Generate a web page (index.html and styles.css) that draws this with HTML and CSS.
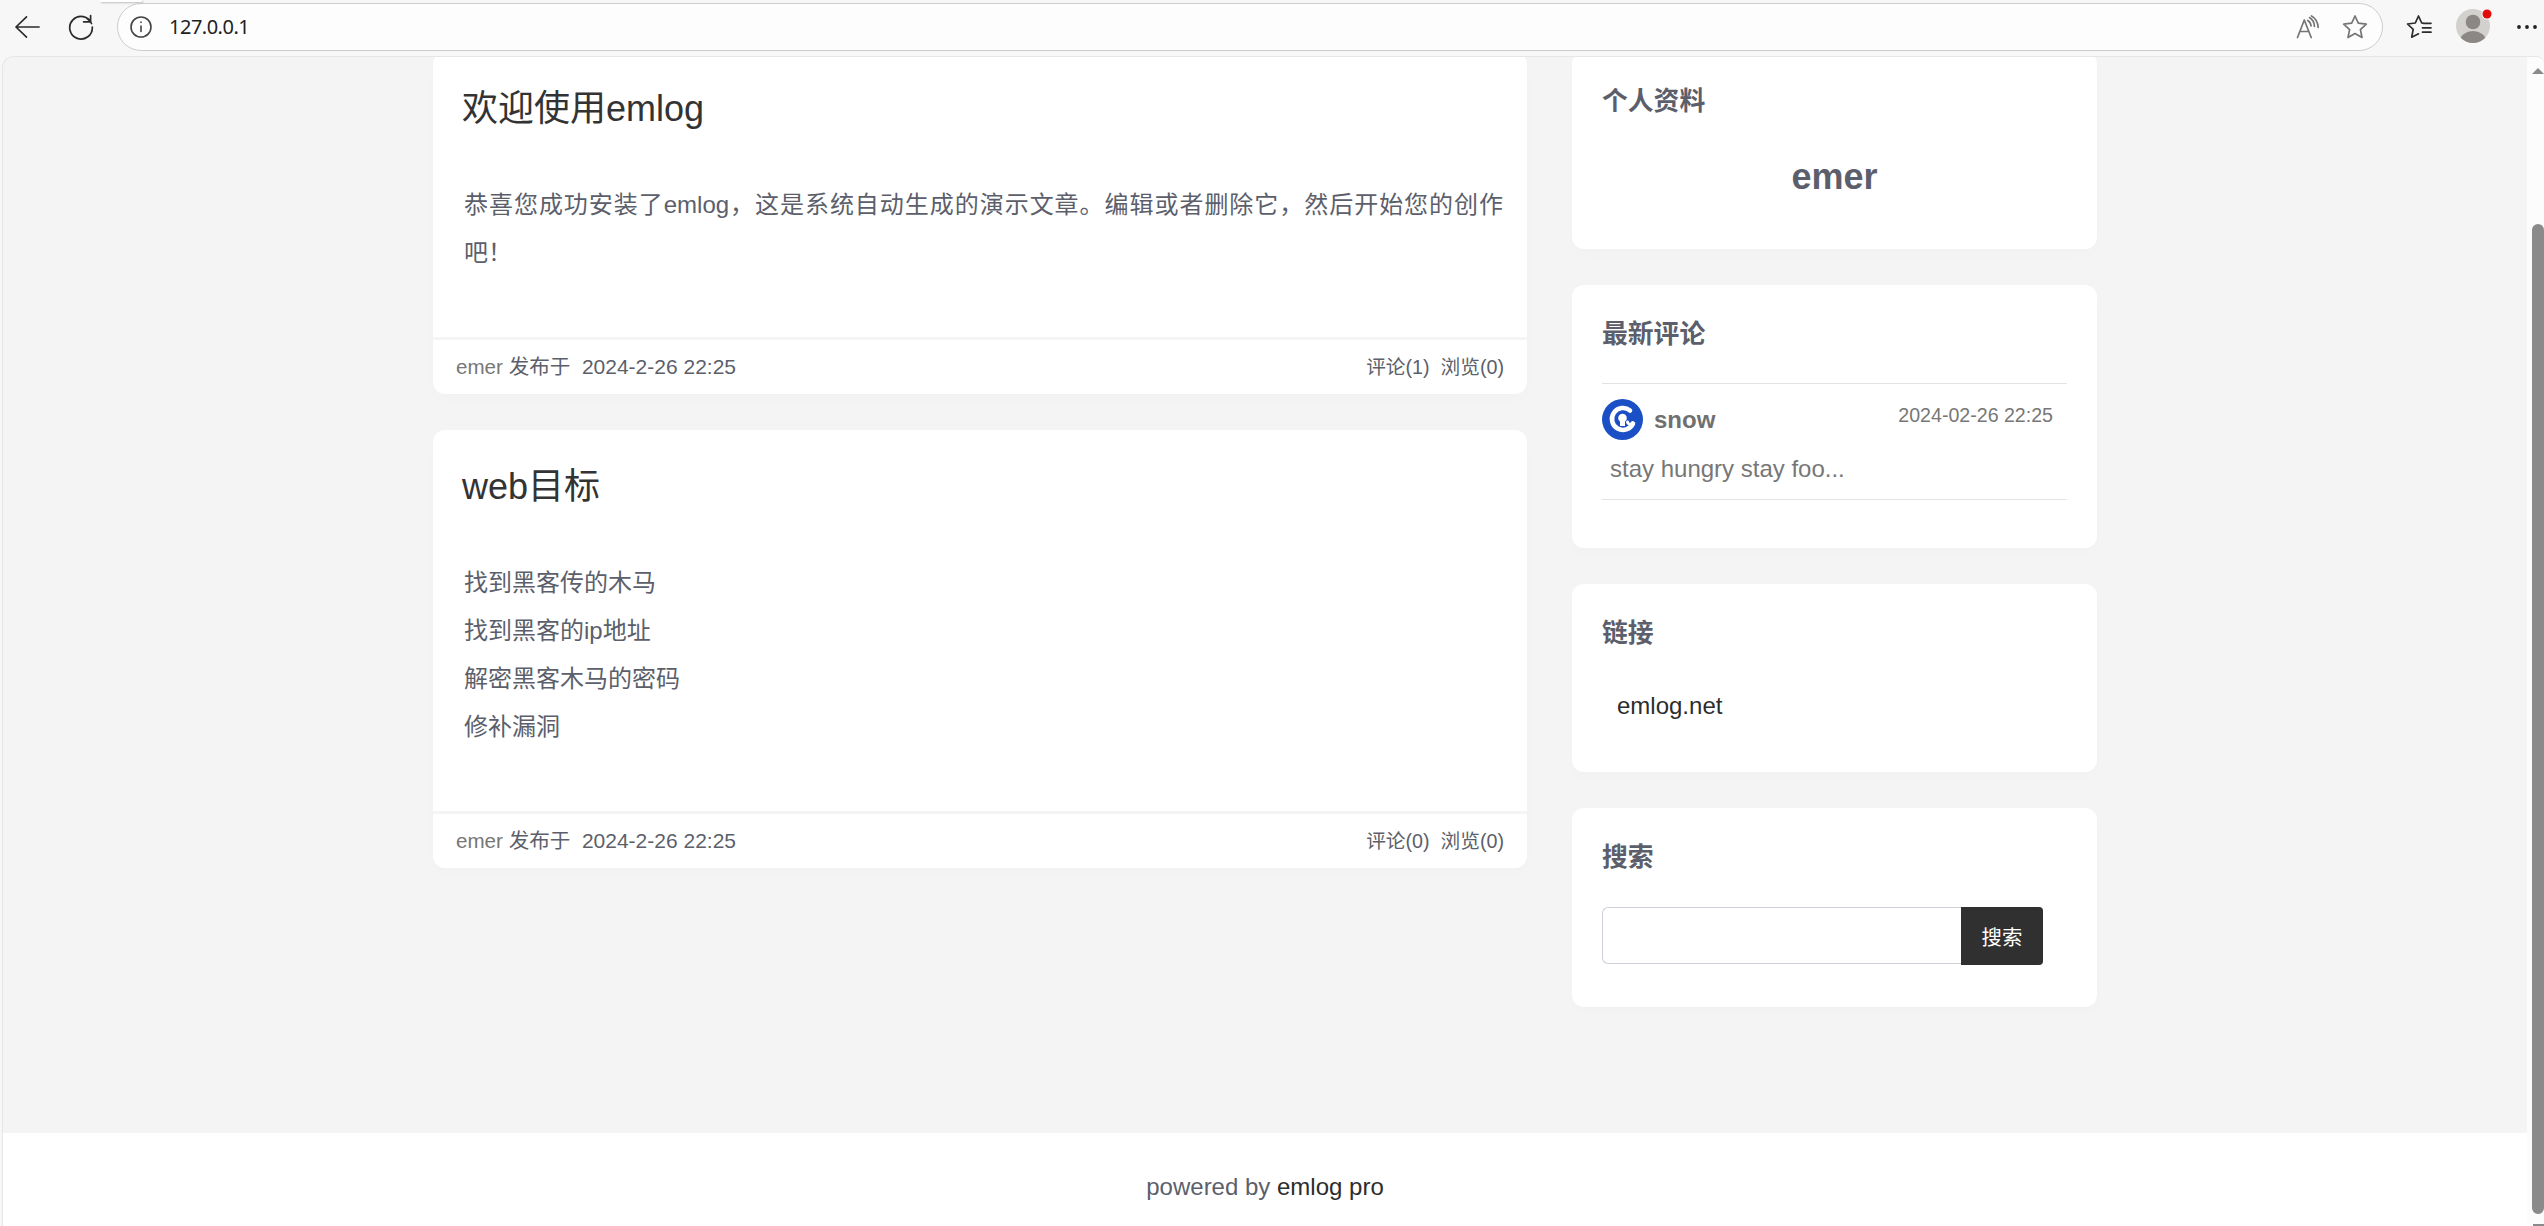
FILE: index.html
```html
<!DOCTYPE html>
<html lang="zh-CN">
  <head>
    <meta charset="UTF-8" />
    <title>emlog</title>
    <link rel="stylesheet" href="styles.css">
  </head>
  <body>
    <!-- Browser toolbar -->
    <header class="toolbar">
      <span class="tab-edge"></span>
      <svg class="icon-back" width="26" height="24" viewBox="0 0 26 24"><path d="M25 12H2M12.500 1.800L2 12l10.500 10.200" /></svg>
      <svg class="icon-reload" width="26" height="26" viewBox="0 0 26 26"><path d="M23.500 9.500A11.300 11.300 0 1 0 24.300 13M22.600 1.500v6.300h-7M22.600 7.800L18.500 3.800" /></svg>
      <div class="address">
        <svg class="icon-info" width="24" height="24" viewBox="0 0 24 24"><circle cx="12" cy="12" r="10" /><path d="M12 11v5.500M12 7v.5" /></svg>
        <span class="url">127.0.0.1</span>
        <svg class="icon-read" width="24" height="24" viewBox="0 0 24 24"><path d="M1.500 22.500L8.300 5l6.900 17.500M4 16.500h8.800M11.800 5.500c2 1.200 3 3 3.300 5.500M13.500 2.600c3.100 1.800 4.700 4.600 5 8.900M15.500.900c4 2.200 6.300 5.800 6.700 11.600" /></svg>
        <svg class="icon-star" width="26" height="26" viewBox="0 0 26 26"><path d="M13 2l3.300 7.200 8 1-5.900 5.400 1.600 7.900-7-3.900-7 3.900 1.600-7.900-5.900-5.400 8-1z" /></svg>
      </div>
      <svg class="icon-fav" width="26" height="26" viewBox="0 0 26 26"><path d="M17 9.200l-1.300-.200L12.500 2 9.300 9l-7.800 1 5.700 5.400-1.500 7.800 6.800-3.400M17.500 9.300h7.500M16.500 13.800H25M16.500 18.200H25" /></svg>
      <svg class="icon-user" width="38" height="38" viewBox="0 0 38 38">
        <defs><clipPath id="user"><circle cx="17" cy="20" r="17" /></clipPath></defs>
        <circle cx="17" cy="20" r="17" fill="#d3d1ce" />
        <g clip-path="url(#user)" fill="#8a8785"><circle cx="17" cy="16" r="7.300" /><ellipse cx="17" cy="35" rx="13" ry="10" /></g>
        <circle cx="31" cy="8" r="5.500" fill="#f7f7f7" /><circle cx="31" cy="8" r="4.500" fill="#e20a0a" />
      </svg>
      <svg class="icon-more" width="22" height="6" viewBox="0 0 22 6"><circle cx="3" cy="3" r="1.900" /><circle cx="11" cy="3" r="1.900" /><circle cx="19" cy="3" r="1.900" /></svg>
    </header>

    <!-- Page -->
    <div class="window">
      <div class="page">
        <main class="container">
          <!-- Articles -->
          <section class="log-list">
            <article class="card log">
              <h2 class="log-title">欢迎使用emlog</h2>
              <div class="log-content">
                <p>恭喜您成功安装了emlog，这是系统自动生成的演示文章。编辑或者删除它，然后开始您的创作吧！</p>
              </div>
              <div class="log-info">
                <span><a class="author">emer</a> 发布于&nbsp; <span class="date">2024-2-26 22:25</span></span>
                <span class="count">评论(1)&nbsp; 浏览(0)</span>
              </div>
            </article>
            <article class="card log">
              <h2 class="log-title">web目标</h2>
              <div class="log-content">
                <p>找到黑客传的木马</p>
                <p>找到黑客的ip地址</p>
                <p>解密黑客木马的密码</p>
                <p>修补漏洞</p>
              </div>
              <div class="log-info">
                <span><a class="author">emer</a> 发布于&nbsp; <span class="date">2024-2-26 22:25</span></span>
                <span class="count">评论(0)&nbsp; 浏览(0)</span>
              </div>
            </article>
          </section>

          <!-- Sidebar -->
          <aside class="side">
            <div class="card widget widget-profile">
              <h3>个人资料</h3>
              <p class="blogger">emer</p>
            </div>
            <div class="card widget widget-comment">
              <h3>最新评论</h3>
              <div class="comment">
                <div class="comment-head">
                  <svg class="avatar" width="41" height="41" viewBox="0 0 41 41">
                    <circle cx="20.500" cy="20.500" r="20.500" fill="#1b4fc6" />
                    <path d="M28 11.500A11 11 0 1 0 31 24.500" fill="none" stroke="#fff" stroke-width="4.600" stroke-linecap="round" />
                    <path d="M31 24.500Q26 26.500 25.500 23" fill="none" stroke="#fff" stroke-width="3" stroke-linecap="round" />
                    <circle cx="20.500" cy="19" r="4.300" fill="#fff" />
                    <path d="M18 20h5v7h-5z" fill="#fff" />
                  </svg>
                  <span class="name">snow</span>
                  <span class="time">2024-02-26 22:25</span>
                </div>
                <p class="comment-text">stay hungry stay foo...</p>
              </div>
            </div>
            <div class="card widget widget-link">
              <h3>链接</h3>
              <a class="link">emlog.net</a>
            </div>
            <div class="card widget widget-search">
              <h3>搜索</h3>
              <form class="search">
                <input type="text" class="search-input" />
                <button type="button" class="search-btn">搜索</button>
              </form>
            </div>
          </aside>
        </main>
        <footer class="footer">powered by&nbsp;<a>emlog pro</a></footer>
      </div>

      <!-- Scrollbar -->
      <div class="scrollbar">
        <span class="arrow-up"></span>
        <span class="thumb"></span>
        <span class="arrow-down"></span>
      </div>
    </div>
  </body>
</html>
```
FILE: styles.css
```css
* {
  box-sizing: border-box;
}
body {
  margin: 0;
  height: 1226px;
  overflow: hidden;
  display: flex;
  flex-direction: column;
  background: #f7f7f7;
  color: #5c5f6b;
  font: 24px/48px "Liberation Sans", "Noto Sans CJK SC", sans-serif;
}
h2,
h3,
p {
  margin: 0;
}

/* Browser toolbar */
.toolbar {
  position: relative;
  flex: none;
  height: 56px;
  display: flex;
  align-items: center;
  padding: 0 6px 2px 14px;
}
.toolbar svg {
  flex: none;
}
.tab-edge {
  position: absolute;
  left: 100px;
  top: 0;
  width: 42px;
  height: 2px;
  background: #fff;
  box-shadow: 1px 1px 2px #bbb;
}
.icon-back,
.icon-reload,
.icon-info,
.icon-read,
.icon-star,
.icon-fav {
  fill: none;
  stroke: #2b2b2b;
  stroke-width: 1.7;
  stroke-linejoin: round;
  stroke-linecap: round;
}
.icon-reload {
  margin-left: 28px;
}
.address {
  flex: 1;
  height: 48px;
  margin-left: 23px;
  display: flex;
  align-items: center;
  padding: 0 14px 0 11px;
  border: 1px solid #cdcdcd;
  border-radius: 24px;
  background: #fdfdfd;
}
.icon-info {
  stroke-width: 1.6;
  stroke: #444;
}
.url {
  flex: 1;
  margin-left: 16px;
  font: 20px/28px "Noto Sans", sans-serif;
  letter-spacing: -0.5px;
  color: #222;
}
.icon-read,
.icon-star {
  stroke: #757575;
}
.icon-star {
  margin-left: 22px;
}
.icon-fav {
  margin-left: 23px;
}
.icon-user {
  margin: 0 0 4px 24px;
}
.icon-more {
  margin-left: 22px;
  fill: #222;
}

/* Page */
.window {
  flex: 1;
  min-height: 0;
  margin-left: 2px;
  display: flex;
  overflow: hidden;
  border: 1px solid #e6e6e6;
  border-width: 1px 0 0 1px;
  border-radius: 12px 8px 0 0;
  background: #f4f4f4;
}
.page {
  flex: 1;
  display: flex;
  flex-direction: column;
}
.container {
  width: 1664px;
  height: 1081px;
  margin: -5px 0 0 430px;
  display: flex;
  justify-content: space-between;
  align-items: flex-start;
}
.card {
  margin-bottom: 36px;
  border-radius: 12px;
  background: #fff;
  box-shadow: 0 6px 12px rgba(0, 0, 0, 0.012);
}

/* Articles */
.log-list {
  width: 1094px;
}
.log-title {
  padding: 30px 29px 45px;
  font-size: 36px;
  font-weight: 400;
  line-height: 54px;
  color: #333;
}
.log-content {
  padding: 0 24px 60px 31px;
  text-align: justify;
  text-spacing-trim: space-all;
}
.log-info {
  display: flex;
  justify-content: space-between;
  height: 57px;
  padding: 0 23px;
  border-top: 3px solid #f4f4f4;
  font-size: 20.6px;
  line-height: 54px;
}
.author {
  color: #777;
}
.date {
  font-size: 21px;
}
.count {
  font-size: 19.7px;
}

/* Sidebar */
.side {
  width: 525px;
}
.widget {
  padding: 30px;
}
.widget h3 {
  font-size: 25.8px;
  line-height: 39px;
}
.widget-profile {
  height: 197px;
}
.blogger {
  margin-top: 32px;
  text-align: center;
  font-size: 36px;
  font-weight: bold;
}
.widget-comment {
  height: 263px;
}
.comment {
  height: 117px;
  margin-top: 29px;
  border: 1px solid #e2e2e2;
  border-width: 1px 0;
  color: #777;
}
.comment-head {
  display: flex;
  align-items: center;
  height: 41px;
  margin-top: 15px;
}
.name {
  margin-left: 11px;
  font-weight: bold;
  color: #707070;
}
.time {
  margin: -9px 14px 0 auto;
  font-size: 19.6px;
}
.comment-text {
  padding: 5px 8px 0;
}
.widget-link {
  height: 188px;
}
.link {
  display: block;
  margin: 29px 0 0 15px;
  color: #2d2d2d;
}
.widget-search {
  height: 199px;
}
.search {
  display: flex;
  align-items: flex-start;
  margin-top: 30px;
}
.search-input {
  width: 359px;
  height: 57px;
  border: 1px solid #cfcfd8;
  border-right: 0;
  border-radius: 6px 0 0 6px;
}
.search-btn {
  width: 82px;
  height: 58px;
  padding: 0;
  border: 0;
  border-radius: 0 4px 4px 0;
  background: #303030;
  color: #fff;
  font: 20.4px/58px "Noto Sans CJK SC", sans-serif;
}

/* Footer */
.footer {
  flex: 1;
  padding-top: 30px;
  text-align: center;
  background: #fff;
}
.footer a {
  color: #2d2d2d;
}

/* Scrollbar */
.scrollbar {
  flex: none;
  width: 17px;
  display: flex;
  flex-direction: column;
  align-items: flex-end;
  background: #fcfcfc;
}
.arrow-up {
  margin-top: 11px;
  border: 6px solid transparent;
  border-top: 0;
  border-bottom-color: #8a8a8a;
}
.thumb {
  width: 12px;
  height: 990px;
  margin-top: 150px;
  border-radius: 6px;
  background: #8a8a8a;
}
.arrow-down {
  width: 11px;
  height: 2px;
  margin-top: 10px;
  background: #8a8a8a;
}
```
